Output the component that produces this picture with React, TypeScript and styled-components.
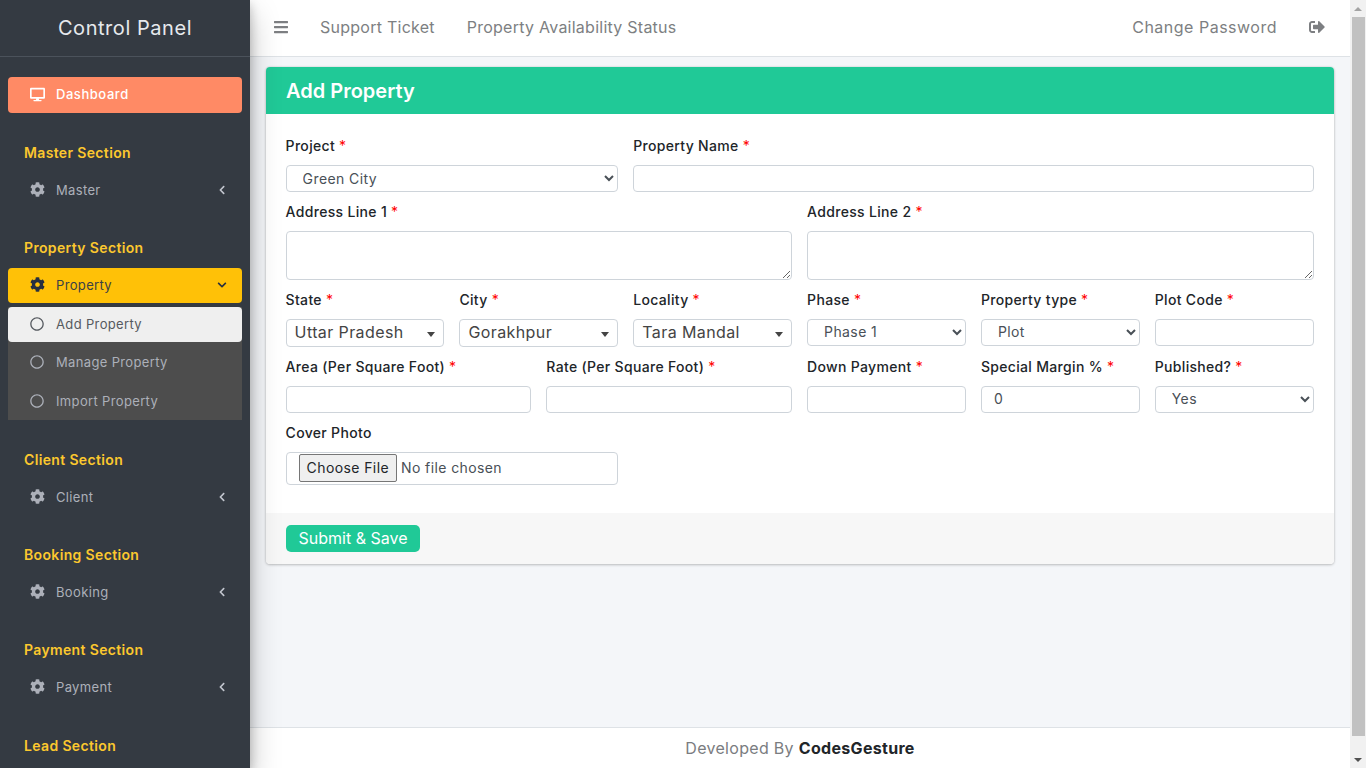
import styled, { createGlobalStyle } from "styled-components";
import {
  FaBars,
  FaChevronDown,
  FaChevronLeft,
  FaCog,
  FaDesktop,
  FaRegCircle,
  FaSignOutAlt,
} from "react-icons/fa";

const GlobalStyle = createGlobalStyle`
  html, body {
    margin: 0;
    height: 100%;
    overflow: hidden;
    background: #f4f6f9;
  }
  body, input, select, textarea, button {
    font-family: Inter, "Noto Sans", sans-serif;
  }
  * {
    box-sizing: border-box;
  }
`;

const Shell = styled.div`
  display: flex;
  height: 768px;
  width: 1366px;
`;

const Sidebar = styled.aside`
  width: 250px;
  flex: none;
  height: 768px;
  overflow: hidden;
  background: #343a42;
  box-shadow: 0 14px 28px rgba(0, 0, 0, 0.25), 0 4px 10px rgba(0, 0, 0, 0.22);
  position: relative;
  z-index: 2;
`;

const Brand = styled.div`
  height: 57px;
  border-bottom: 1px solid #4b525b;
  display: flex;
  align-items: center;
  justify-content: center;
  color: #e6e9ed;
  font-size: 20px;
  letter-spacing: 0.55px;
`;

const SideNav = styled.nav`
  padding: 20px 8px 0;
`;

const NavRow = styled.div<{ $variant?: "dashboard" | "open" }>`
  height: ${(p) => (p.$variant === "dashboard" ? "36px" : "35px")};
  display: flex;
  align-items: center;
  padding: 0 15px 2px 22px;
  border-radius: 4px;
  font-size: 13px;
  letter-spacing: ${(p) => (p.$variant === "dashboard" ? "0.55px" : "0.35px")};
  color: ${(p) =>
    p.$variant === "dashboard" ? "#fff" : p.$variant === "open" ? "#3c4046" : "#acb0b9"};
  font-weight: ${(p) => (p.$variant === "dashboard" ? 500 : 400)};
  background: ${(p) =>
    p.$variant === "dashboard" ? "#ff8a65" : p.$variant === "open" ? "#ffc107" : "transparent"};

  > svg {
    width: 15px;
    height: 15px;
    margin-right: 11px;
    flex: none;
    color: ${(p) => (p.$variant === "open" ? "#273040" : "inherit")};
  }
`;

const Caret = styled.span<{ $open?: boolean }>`
  margin-left: auto;
  display: flex;
  color: ${(p) => (p.$open ? "#273040" : "#c2c6ce")};

  svg {
    width: 10px;
    height: 10px;
  }
`;

const SectionBlock = styled.section`
  margin-top: 30.1px;
`;

const SectionTitle = styled.h3`
  margin: 0 0 10px;
  padding-left: 16px;
  height: 20px;
  line-height: 20px;
  font-size: 14px;
  font-weight: 600;
  letter-spacing: 0.35px;
  color: #fcc82e;
`;

const SubMenu = styled.div`
  margin-top: 4px;
  background: #4d4d4d;
  display: flex;
  flex-direction: column;
  gap: 3.5px;
  padding-bottom: 1px;
`;

const SubItem = styled.div<{ $active?: boolean }>`
  height: 35px;
  display: flex;
  align-items: center;
  padding: 0 0 2px 22px;
  border-radius: ${(p) => (p.$active ? "4px" : "0")};
  background: ${(p) => (p.$active ? "#efefef" : "transparent")};
  color: ${(p) => (p.$active ? "#565a60" : "#acb0b9")};
  font-size: 13px;
  letter-spacing: 0.35px;

  svg {
    width: 14px;
    height: 14px;
    margin-right: 12px;
  }
`;

const Main = styled.div`
  flex: 1;
  min-width: 0;
  display: flex;
  flex-direction: column;
  height: 768px;
`;

const TopBar = styled.header`
  height: 57px;
  flex: none;
  background: #fff;
  border-bottom: 1px solid #dee2e6;
  display: flex;
  align-items: center;
  padding: 0 25px 2px 24px;
  color: #7d7f82;
  font-size: 16px;
  letter-spacing: 0.3px;
`;

const MenuIcon = styled(FaBars)`
  width: 14px;
  height: 16px;
  margin-right: 32px;
`;

const TopLink = styled.span<{ $right?: boolean }>`
  margin-right: 32px;
  margin-left: ${(p) => (p.$right ? "auto" : "0")};
  letter-spacing: ${(p) => (p.$right ? "0.5px" : "0.25px")};
`;

const LogoutIcon = styled(FaSignOutAlt)`
  width: 16px;
  height: 16px;
`;

const Content = styled.main`
  flex: 1;
  padding: 10px 16px 0;
`;

const Card = styled.div`
  background: #fff;
  border-radius: 4px;
  box-shadow: 0 0 2px rgba(0, 0, 0, 0.15), 0 1px 3px rgba(0, 0, 0, 0.2);
  overflow: hidden;
`;

const CardHeader = styled.div`
  height: 47px;
  background: #20c997;
  color: #fff;
  display: flex;
  align-items: center;
  padding-left: 20px;
  font-size: 20px;
  font-weight: 600;
`;

const FormGrid = styled.form`
  display: grid;
  grid-template-columns: repeat(12, 1fr);
  column-gap: 15px;
  padding: 22px 20.4px 18px 19.6px;
`;

const Field = styled.div<{ $span: number }>`
  grid-column: span ${(p) => p.$span};
  min-width: 0;
  margin-bottom: 10px;
`;

const Label = styled.label`
  display: block;
  height: 20px;
  line-height: 20px;
  margin-bottom: 9px;
  font-size: 14px;
  font-weight: 500;
  letter-spacing: 0.32px;
  color: #212529;
  white-space: nowrap;
`;

const Req = styled.span`
  color: #ff0000;
  font-weight: 400;
`;

const TextInput = styled.input`
  display: block;
  width: 100%;
  height: 27px;
  padding: 0 12px 2px;
  border: 1px solid #ced4da;
  border-radius: 4px;
  background: #fff;
  color: #495057;
  font-size: 14px;
  outline: none;
`;

const TextArea = styled.textarea`
  display: block;
  width: 100%;
  height: 49px;
  padding: 6px 12px;
  border: 1px solid #ced4da;
  border-radius: 4px;
  background: #fff;
  outline: none;
`;

const NativeSelect = styled.select<{ $lift?: boolean }>`
  display: block;
  width: 100%;
  height: 27px;
  padding: 0 0 ${(p) => (p.$lift ? "3px" : "1px")} 12px;
  border: 1px solid #ced4da;
  border-radius: 4px;
  background: #fff;
  color: #495057;
  font-size: 14px;
  letter-spacing: 0.4px;
  outline: none;
`;

const SearchSelect = styled.div`
  height: 28px;
  display: flex;
  align-items: center;
  justify-content: space-between;
  padding: 0 8px 3px 8px;
  border: 1px solid #ced4da;
  border-radius: 4px;
  background: #fff;
  color: #444;
  font-size: 16px;
  letter-spacing: 0.4px;
  white-space: nowrap;
`;

const SelectArrow = styled.span`
  width: 0;
  height: 0;
  margin-top: 5px;
  border-style: solid;
  border-width: 5px 4px 0;
  border-color: #444 transparent transparent;
`;

const FileBox = styled.div`
  height: 33px;
  padding: 1px 12px;
  border: 1px solid #ced4da;
  border-radius: 4px;
  background: #fff;
`;

const FileInput = styled.input`
  display: block;
  width: 100%;
  height: 28px;
  color: #495057;
  font-size: 14px;
  letter-spacing: 0.4px;

  &::file-selector-button {
    height: 28px;
    margin-right: 4px;
    padding: 0 7px 2px;
    font: inherit;
    letter-spacing: 0.4px;
    color: #212529;
    background: #efefef;
    border: 1px solid #767676;
    border-radius: 2px;
  }
`;

const CardFooter = styled.div`
  height: 51px;
  background: #f7f7f7;
  padding: 12px 20px;
`;

const SubmitButton = styled.button`
  display: block;
  width: 134px;
  height: 27px;
  padding: 0 0 2px;
  border: 0;
  border-radius: 5px;
  background: #20c997;
  color: #fff;
  font-size: 16px;
  font-weight: 400;
`;

const PageFooter = styled.footer`
  height: 41px;
  flex: none;
  background: #fff;
  border-top: 1px solid #dee2e6;
  display: flex;
  align-items: center;
  justify-content: center;
  gap: 5px;
  font-size: 16px;
  letter-spacing: 0.3px;
  color: #7a7c80;

  strong {
    color: #212529;
    font-weight: 700;
  }
`;

const ScrollTrack = styled.div`
  width: 16px;
  flex: none;
  height: 768px;
  background: #f1f1f1;
  display: flex;
  flex-direction: column;
  align-items: center;
`;

const ScrollArrow = styled.div<{ $dir: "up" | "down" }>`
  height: 17px;
  flex: none;
  display: flex;
  align-items: center;
  justify-content: center;

  &::after {
    content: "";
    border-style: solid;
    border-width: ${(p) => (p.$dir === "up" ? "0 4px 4px" : "4px 4px 0")};
    border-color: ${(p) =>
      p.$dir === "up"
        ? "transparent transparent #a3a3a3"
        : "#505050 transparent transparent"};
  }
`;

const ScrollThumb = styled.div`
  width: 13px;
  height: 719px;
  flex: none;
  background: #c1c1c1;
`;

const ScrollGap = styled.div`
  flex: 1;
`;

const sections = ["Master", "Property", "Client", "Booking", "Payment", "Lead"];
const propertyLinks = ["Add Property", "Manage Property", "Import Property"];

const Required = () => <Req>*</Req>;

const App = () => {
  return (
    <>
      <GlobalStyle />
      <Shell>
        <Sidebar>
          <Brand>Control Panel</Brand>
          <SideNav>
            <NavRow $variant="dashboard">
              <FaDesktop />
              Dashboard
            </NavRow>
            {sections.map((name) => {
              const open = name === "Property";
              return (
                <SectionBlock key={name}>
                  <SectionTitle>{name} Section</SectionTitle>
                  {/* the Lead row sits below the fold in this view */}
                  {name !== "Lead" && (
                    <NavRow $variant={open ? "open" : undefined}>
                      <FaCog />
                      {name}
                      <Caret $open={open}>{open ? <FaChevronDown /> : <FaChevronLeft />}</Caret>
                    </NavRow>
                  )}
                  {open && (
                    <SubMenu>
                      {propertyLinks.map((link, i) => (
                        <SubItem key={link} $active={i === 0}>
                          <FaRegCircle />
                          {link}
                        </SubItem>
                      ))}
                    </SubMenu>
                  )}
                </SectionBlock>
              );
            })}
          </SideNav>
        </Sidebar>

        <Main>
          <TopBar>
            <MenuIcon />
            <TopLink>Support Ticket</TopLink>
            <TopLink>Property Availability Status</TopLink>
            <TopLink $right>Change Password</TopLink>
            <LogoutIcon />
          </TopBar>
          <Content>
            <Card>
              <CardHeader>Add Property</CardHeader>
              <FormGrid>
                <Field $span={4}>
                  <Label>Project <Required /></Label>
                  <NativeSelect defaultValue="Green City">
                    <option>Green City</option>
                  </NativeSelect>
                </Field>
                <Field $span={8}>
                  <Label>Property Name <Required /></Label>
                  <TextInput />
                </Field>
                <Field $span={6}>
                  <Label>Address Line 1 <Required /></Label>
                  <TextArea />
                </Field>
                <Field $span={6}>
                  <Label>Address Line 2 <Required /></Label>
                  <TextArea />
                </Field>
                <Field $span={2}>
                  <Label>State <Required /></Label>
                  <SearchSelect>Uttar Pradesh<SelectArrow /></SearchSelect>
                </Field>
                <Field $span={2}>
                  <Label>City <Required /></Label>
                  <SearchSelect>Gorakhpur<SelectArrow /></SearchSelect>
                </Field>
                <Field $span={2}>
                  <Label>Locality <Required /></Label>
                  <SearchSelect>Tara Mandal<SelectArrow /></SearchSelect>
                </Field>
                <Field $span={2}>
                  <Label>Phase <Required /></Label>
                  <NativeSelect $lift defaultValue="Phase 1">
                    <option>Phase 1</option>
                  </NativeSelect>
                </Field>
                <Field $span={2}>
                  <Label>Property type <Required /></Label>
                  <NativeSelect $lift defaultValue="Plot">
                    <option>Plot</option>
                  </NativeSelect>
                </Field>
                <Field $span={2}>
                  <Label>Plot Code <Required /></Label>
                  <TextInput />
                </Field>
                <Field $span={3}>
                  <Label>Area (Per Square Foot) <Required /></Label>
                  <TextInput />
                </Field>
                <Field $span={3}>
                  <Label>Rate (Per Square Foot) <Required /></Label>
                  <TextInput />
                </Field>
                <Field $span={2}>
                  <Label>Down Payment <Required /></Label>
                  <TextInput />
                </Field>
                <Field $span={2}>
                  <Label>Special Margin % <Required /></Label>
                  <TextInput defaultValue="0" />
                </Field>
                <Field $span={2}>
                  <Label>Published? <Required /></Label>
                  <NativeSelect $lift defaultValue="Yes">
                    <option>Yes</option>
                  </NativeSelect>
                </Field>
                <Field $span={4}>
                  <Label>Cover Photo</Label>
                  <FileBox>
                    <FileInput type="file" />
                  </FileBox>
                </Field>
              </FormGrid>
              <CardFooter>
                <SubmitButton type="button">Submit &amp; Save</SubmitButton>
              </CardFooter>
            </Card>
          </Content>
          <PageFooter>
            Developed By <strong>CodesGesture</strong>
          </PageFooter>
        </Main>

        <ScrollTrack>
          <ScrollArrow $dir="up" />
          <ScrollThumb />
          <ScrollGap />
          <ScrollArrow $dir="down" />
        </ScrollTrack>
      </Shell>
    </>
  );
};

export default App;
